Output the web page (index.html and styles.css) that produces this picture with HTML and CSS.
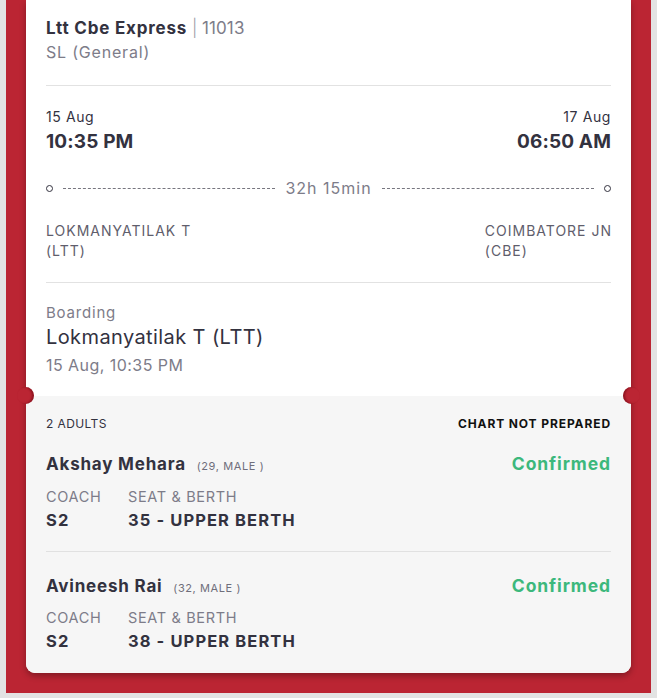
FILE: index.html
```html
<!DOCTYPE html>
<html>
<head>
<meta charset="utf-8">
<link rel="stylesheet" href="styles.css">
</head>
<body>
<div class="frame">
  <div class="card">
    <div class="top">
      <div class="train"><b>Ltt Cbe Express</b> <span class="pipe">|</span> <span class="num">11013</span></div>
      <div class="cls">SL (General)</div>
      <div class="divider"></div>
      <div class="times">
        <div class="t-col">
          <div class="date">15 Aug</div>
          <div class="time">10:35 PM</div>
        </div>
        <div class="t-col right">
          <div class="date">17 Aug</div>
          <div class="time">06:50 AM</div>
        </div>
      </div>
      <div class="track">
        <span class="dot"></span>
        <span class="dash"></span>
        <span class="dur">32h 15min</span>
        <span class="dash"></span>
        <span class="dot"></span>
      </div>
      <div class="stations">
        <div class="st">LOKMANYATILAK T<br>(LTT)</div>
        <div class="st">COIMBATORE JN<br>(CBE)</div>
      </div>
      <div class="divider d2"></div>
      <div class="boarding">
        <div class="b-label">Boarding</div>
        <div class="b-station">Lokmanyatilak T (LTT)</div>
        <div class="b-time">15 Aug, 10:35 PM</div>
      </div>
    </div>
    <div class="pax">
      <div class="pax-head">
        <span class="adults">2 ADULTS</span>
        <span class="chart">CHART NOT PREPARED</span>
      </div>
      <div class="person">
        <div class="p-row">
          <div class="p-name">Akshay Mehara <span class="p-info">(29, MALE )</span></div>
          <div class="status">Confirmed</div>
        </div>
        <div class="p-grid">
          <div class="lbl">COACH</div>
          <div class="lbl">SEAT &amp; BERTH</div>
          <div class="val">S2</div>
          <div class="val">35 - UPPER BERTH</div>
        </div>
      </div>
      <div class="person last">
        <div class="p-row">
          <div class="p-name">Avineesh Rai <span class="p-info">(32, MALE )</span></div>
          <div class="status">Confirmed</div>
        </div>
        <div class="p-grid">
          <div class="lbl">COACH</div>
          <div class="lbl">SEAT &amp; BERTH</div>
          <div class="val">S2</div>
          <div class="val">38 - UPPER BERTH</div>
        </div>
      </div>
    </div>
  </div>
</div>
</body>
</html>
```
FILE: styles.css
```css
* { box-sizing: border-box; }
html, body { margin: 0; padding: 0; }
body {
  background: #e3e3e3;
  padding: 0 6px;
  font-family: "Inter", "Open Sans", sans-serif;
  color: #33323f;
}
.frame {
  background: #bb2533;
  padding: 0 20px 20px;
  height: 693px;
}
.card {
  background: #fff;
  border-radius: 0 0 9px 9px;
  box-shadow: 0 3px 6px rgba(0,0,0,0.3);
}
.top { padding: 16px 20px 0; }
.train { font-size: 17px; line-height: 24px; color: #33323f; }
.train b { font-weight: 700; letter-spacing: 0.8px; }
.pipe { color: #9a9aa6; font-weight: 300; }
.num { color: #7d7c89; letter-spacing: 0.1px; }
.cls { font-size: 16px; line-height: 22px; color: #7d7c89; margin-top: 1px; letter-spacing: 0.8px; }
.divider { height: 1px; background: #e2e2e2; margin-top: 22px; }
.times { display: flex; justify-content: space-between; margin-top: 22px; }
.t-col.right { text-align: right; }
.date { font-size: 14px; line-height: 18px; color: #33323f; letter-spacing: 0.6px; }
.time { font-size: 19px; font-weight: 700; line-height: 26px; margin-top: 3px; color: #33323f; letter-spacing: 0.15px; }
.track { display: flex; align-items: center; margin-top: 24px; height: 18px; }
.dot { width: 7px; height: 7px; border: 1.3px solid #33323f; border-radius: 50%; flex: none; }
.dash { flex: 1; border-top: 1px dashed #77767f; margin: 0 10px; height: 0; }
.dur { font-size: 16px; color: #7d7c89; line-height: 18px; letter-spacing: 1px; }
.stations { display: flex; justify-content: space-between; margin-top: 24px; }
.st { font-size: 14px; line-height: 20px; color: #5f5e6c; letter-spacing: 1px; }
.stations .st:last-child { margin-right: -1px; }
.divider.d2 { margin-top: 21px; }
.boarding { padding: 20px 0 20px; }
.b-label { font-size: 15px; line-height: 20px; color: #7d7c89; letter-spacing: 0.8px; }
.b-station { font-size: 20px; line-height: 28px; color: #33323f; margin-top: 0; letter-spacing: 0.4px; }
.b-time { font-size: 16px; line-height: 22px; color: #7d7c89; margin-top: 3px; letter-spacing: 0.45px; }
.pax {
  position: relative;
  background: #f6f6f6;
  padding: 19px 20px 19px;
  border-radius: 0 0 9px 9px;
}
.pax::before, .pax::after {
  content: "";
  position: absolute;
  top: -9px;
  width: 17px;
  height: 17px;
  border-radius: 50%;
  background: #bb2533;
}
.pax::before { left: -9px; box-shadow: inset -2px 0 2px rgba(90,0,10,0.45); }
.pax::after { right: -9px; box-shadow: inset 2px 0 2px rgba(90,0,10,0.45); }
.pax-head { display: flex; justify-content: space-between; font-size: 12px; line-height: 18px; }
.adults { color: #33323f; letter-spacing: 0.4px; }
.chart { font-weight: 700; color: #111; letter-spacing: 0.9px; }
.person { padding: 19px 0 18px; border-bottom: 1px solid #e1e1e1; }
.person.last { border-bottom: none; padding-top: 22px; padding-bottom: 0; }
.p-row { display: flex; justify-content: space-between; align-items: baseline; }
.p-name { font-size: 17px; font-weight: 700; line-height: 24px; color: #33323f; letter-spacing: 0.8px; }
.p-info { font-size: 11px; font-weight: 400; color: #6f6e7b; margin-left: 6px; letter-spacing: 0.6px; }
.status { font-size: 17.5px; font-weight: 700; color: #3cb87c; letter-spacing: 0.9px; }
.p-grid {
  display: grid;
  grid-template-columns: 82px auto;
  margin-top: 9px;
}
.person.last .p-grid { margin-top: 8px; }
.lbl { font-size: 14.5px; line-height: 20px; color: #7d7c89; letter-spacing: 0.65px; }
.val { font-size: 16.5px; line-height: 26px; font-weight: 700; color: #33323f; letter-spacing: 1.1px; }
```
